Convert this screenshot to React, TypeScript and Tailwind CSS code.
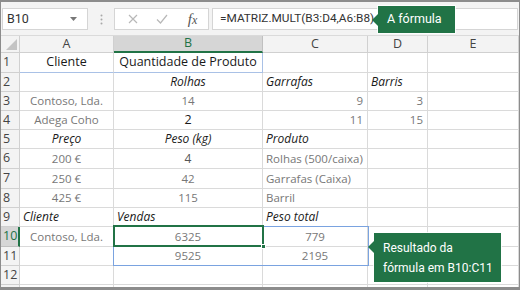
import { FC } from "react";

type Align = "left" | "center" | "right";

interface CellData {
  t?: string;
  a?: Align;
  i?: boolean;
  c?: string;
}

const GRAY = "text-[#777] text-[11.5px]";
const BLACK = "text-[#1a1a1a]";

const rows: { h: string; cells: CellData[] }[] = [
  { h: "h-[20px]", cells: [{ t: "Cliente", a: "center", c: BLACK }, { t: "Quantidade de Produto", a: "center", c: BLACK }, {}, {}, {}] },
  { h: "h-[19px]", cells: [{}, { t: "Rolhas", a: "center", i: true, c: BLACK }, { t: "Garrafas", a: "left", i: true, c: BLACK }, { t: "Barris", a: "left", i: true, c: BLACK }, {}] },
  { h: "h-[19px]", cells: [{ t: "Contoso, Lda.", a: "center" }, { t: "14", a: "center" }, { t: "9", a: "right" }, { t: "3", a: "right" }, {}] },
  { h: "h-[19px]", cells: [{ t: "Adega Coho", a: "center" }, { t: "2", a: "center", c: BLACK }, { t: "11", a: "right" }, { t: "15", a: "right" }, {}] },
  { h: "h-[19px]", cells: [{ t: "Preço", a: "center", i: true, c: BLACK }, { t: "Peso (kg)", a: "center", i: true, c: BLACK }, { t: "Produto", a: "left", i: true, c: BLACK }, {}, {}] },
  { h: "h-[20px]", cells: [{ t: "200 €", a: "center" }, { t: "4", a: "center", c: "text-[#555] text-[12px]" }, { t: "Rolhas (500/caixa)", a: "left" }, {}, {}] },
  { h: "h-[20px]", cells: [{ t: "250 €", a: "center" }, { t: "42", a: "center" }, { t: "Garrafas (Caixa)", a: "left" }, {}, {}] },
  { h: "h-[19px]", cells: [{ t: "425 €", a: "center" }, { t: "115", a: "center" }, { t: "Barril", a: "left" }, {}, {}] },
  { h: "h-[19px]", cells: [{ t: "Cliente", a: "left", i: true, c: BLACK }, { t: "Vendas", a: "left", i: true, c: BLACK }, { t: "Peso total", a: "left", i: true, c: BLACK }, {}, {}] },
  { h: "h-[20px]", cells: [{ t: "Contoso, Lda.", a: "center" }, { t: "6325", a: "center" }, { t: "779", a: "center" }, {}, {}] },
  { h: "h-[19px]", cells: [{}, { t: "9525", a: "center" }, { t: "2195", a: "center" }, {}, {}] },
  { h: "h-[19px]", cells: [{}, {}, {}, {}, {}] },
  { h: "h-[19px]", cells: [{}, {}, {}, {}, {}] },
];

const colWidths = ["w-[94px]", "w-[149px]", "w-[105px]", "w-[60px]", "flex-1"];
const colNames = ["A", "B", "C", "D", "E"];

const alignClass = (a?: Align) =>
  a === "left" ? "justify-start pl-[3px]" : a === "right" ? "justify-end pr-[4px]" : "justify-center";

const Cell: FC<{ d: CellData; w: string; extra?: string }> = ({ d, w, extra }) => (
  <div
    className={`${w} ${alignClass(d.a)} ${d.i ? "italic text-[12px]" : ""} ${d.c ?? GRAY} ${extra ?? ""} shrink-0 flex items-center border-r border-b border-[#dadada] whitespace-nowrap overflow-visible`}
  >
    {d.t}
  </div>
);

const FormulaBar: FC = () => (
  <div className="h-[34px] bg-[#f3f3f3] flex items-start pt-[6px] pl-[1px] border-b border-[#dadada] font-['Roboto',sans-serif]">
    <div className="w-[86px] h-[22px] bg-white border border-[#d5d5d5] flex items-center justify-between px-[4px]">
      <span className="text-[12.5px] text-[#333]">B10</span>
      <svg width="7" height="4" viewBox="0 0 7 4" className="mr-[6px]">
        <path d="M0 0h7L3.5 4z" fill="#777" />
      </svg>
    </div>
    <div className="w-[26px] h-[22px] flex items-center justify-center">
      <svg width="3" height="11" viewBox="0 0 3 11">
        <circle cx="1.5" cy="1.5" r="1" fill="#a8a8a8" />
        <circle cx="1.5" cy="5.5" r="1" fill="#a8a8a8" />
        <circle cx="1.5" cy="9.5" r="1" fill="#a8a8a8" />
      </svg>
    </div>
    <div className="w-[95px] h-[22px] bg-white border border-[#d5d5d5] flex items-center">
      <div className="w-[31px] flex justify-center pl-[4px]">
        <svg width="10" height="10" viewBox="0 0 10 10">
          <path d="M1 1l8 8M9 1l-8 8" stroke="#b8b8b8" strokeWidth="1.2" fill="none" />
        </svg>
      </div>
      <div className="w-[31px] flex justify-center">
        <svg width="12" height="10" viewBox="0 0 12 10">
          <path d="M1 5.5l3.5 3.5L11 1" stroke="#b8b8b8" strokeWidth="1.2" fill="none" />
        </svg>
      </div>
      <div className="w-[31px] flex justify-center">
        <span className="font-['Liberation_Serif',serif] italic text-[15px] text-[#555] leading-none">
          f<span className="text-[12px]">x</span>
        </span>
      </div>
    </div>
    <div className="ml-[3px] flex-1 h-[22px] mr-[1px] bg-white border border-[#d5d5d5] flex items-center pl-[7px] text-[11.8px] text-[#333] whitespace-nowrap">
      =MATRIZ.MULT(B3:D4,A6:B8)
    </div>
  </div>
);

const HeaderRow: FC = () => (
  <div className="h-[17px] flex bg-[#f3f3f3]">
    <div className="w-[19px] shrink-0 border-r border-b border-[#d0d0d0] relative">
      <svg width="11" height="11" viewBox="0 0 11 11" className="absolute right-[2px] bottom-[2px]">
        <path d="M11 0V11H0z" fill="#c4c4c4" />
      </svg>
    </div>
    {colNames.map((n, i) => (
      <div
        key={n}
        className={`${colWidths[i]} shrink-0 flex items-center justify-center text-[12.5px] border-r ${
          n === "B"
            ? "bg-[#d6d6d6] text-[#217346] border-b-2 border-b-[#217346] border-r-[#c0c0c0]"
            : "text-[#444] border-b border-[#d0d0d0]"
        }`}
      >
        {n}
      </div>
    ))}
  </div>
);

const Sheet: FC = () => (
  <div className="relative">
    <HeaderRow />
    {rows.map((r, ri) => {
      const n = ri + 1;
      const sel = n === 10;
      return (
        <div key={n} className={`${r.h} flex`}>
          <div
            className={`w-[19px] shrink-0 flex items-center pl-[2px] text-[12.5px] border-b ${
              sel
                ? "bg-[#d6d6d6] text-[#217346] border-r-2 border-r-[#217346] border-b-[#c0c0c0]"
                : "bg-[#f3f3f3] text-[#444] border-r border-[#d0d0d0]"
            }`}
          >
            {n < 13 ? n : ""}
          </div>
          {r.cells.map((d, ci) => (
            <Cell
              key={ci}
              d={d}
              w={colWidths[ci]}
              extra={
                n === 1 && ci < 2
                  ? `border-b-[#a9c1e6] ${ci === 1 ? "border-r-[#a9c1e6]" : ""}`
                  : ""
              }
            />
          ))}
        </div>
      );
    })}
    {/* range B10:C11 */}
    <div className="absolute left-[112px] top-[190px] w-[256px] h-[40px] border border-[#7aa3e0] pointer-events-none" />
    {/* active cell B10 */}
    <div className="absolute left-[112px] top-[189px] w-[151px] h-[22px] border-2 border-[#217346] pointer-events-none" />
    <div className="absolute left-[260px] top-[208px] w-[5px] h-[5px] bg-[#217346] border border-white pointer-events-none" />
  </div>
);

const Callout: FC<{ className: string; arrowTop: string; children: React.ReactNode }> = ({
  className,
  arrowTop,
  children,
}) => (
  <div className={`absolute bg-[#217346] text-white outline outline-1 outline-white/80 font-['Roboto',sans-serif] whitespace-nowrap ${className}`}>
    <div
      className={`absolute -left-[6px] ${arrowTop} w-0 h-0 border-y-[6px] border-y-transparent border-r-[6px] border-r-[#217346]`}
    />
    {children}
  </div>
);

const App: FC = () => (
  <div className="relative w-[520px] h-[290px] overflow-hidden bg-white font-['Open_Sans','Noto_Sans',sans-serif] text-[12.5px]">
    <div className="w-full h-full border-t-2 border-x border-b-[3px] border-[#8c8c8c] overflow-hidden">
      <FormulaBar />
      <Sheet />
    </div>

    <Callout className="left-[378px] top-[6px] w-[77px] h-[27px] flex items-center pl-[9px] text-[12.5px]" arrowTop="top-[8px]">
      A fórmula
    </Callout>
    <Callout className="left-[374px] top-[233px] w-[127px] h-[49px] flex flex-col justify-center pl-[9px] text-[12px] leading-[20px]" arrowTop="top-[8px]">
      <span>Resultado da</span>
      <span>fórmula em B10:C11</span>
    </Callout>
  </div>
);

export default App;
